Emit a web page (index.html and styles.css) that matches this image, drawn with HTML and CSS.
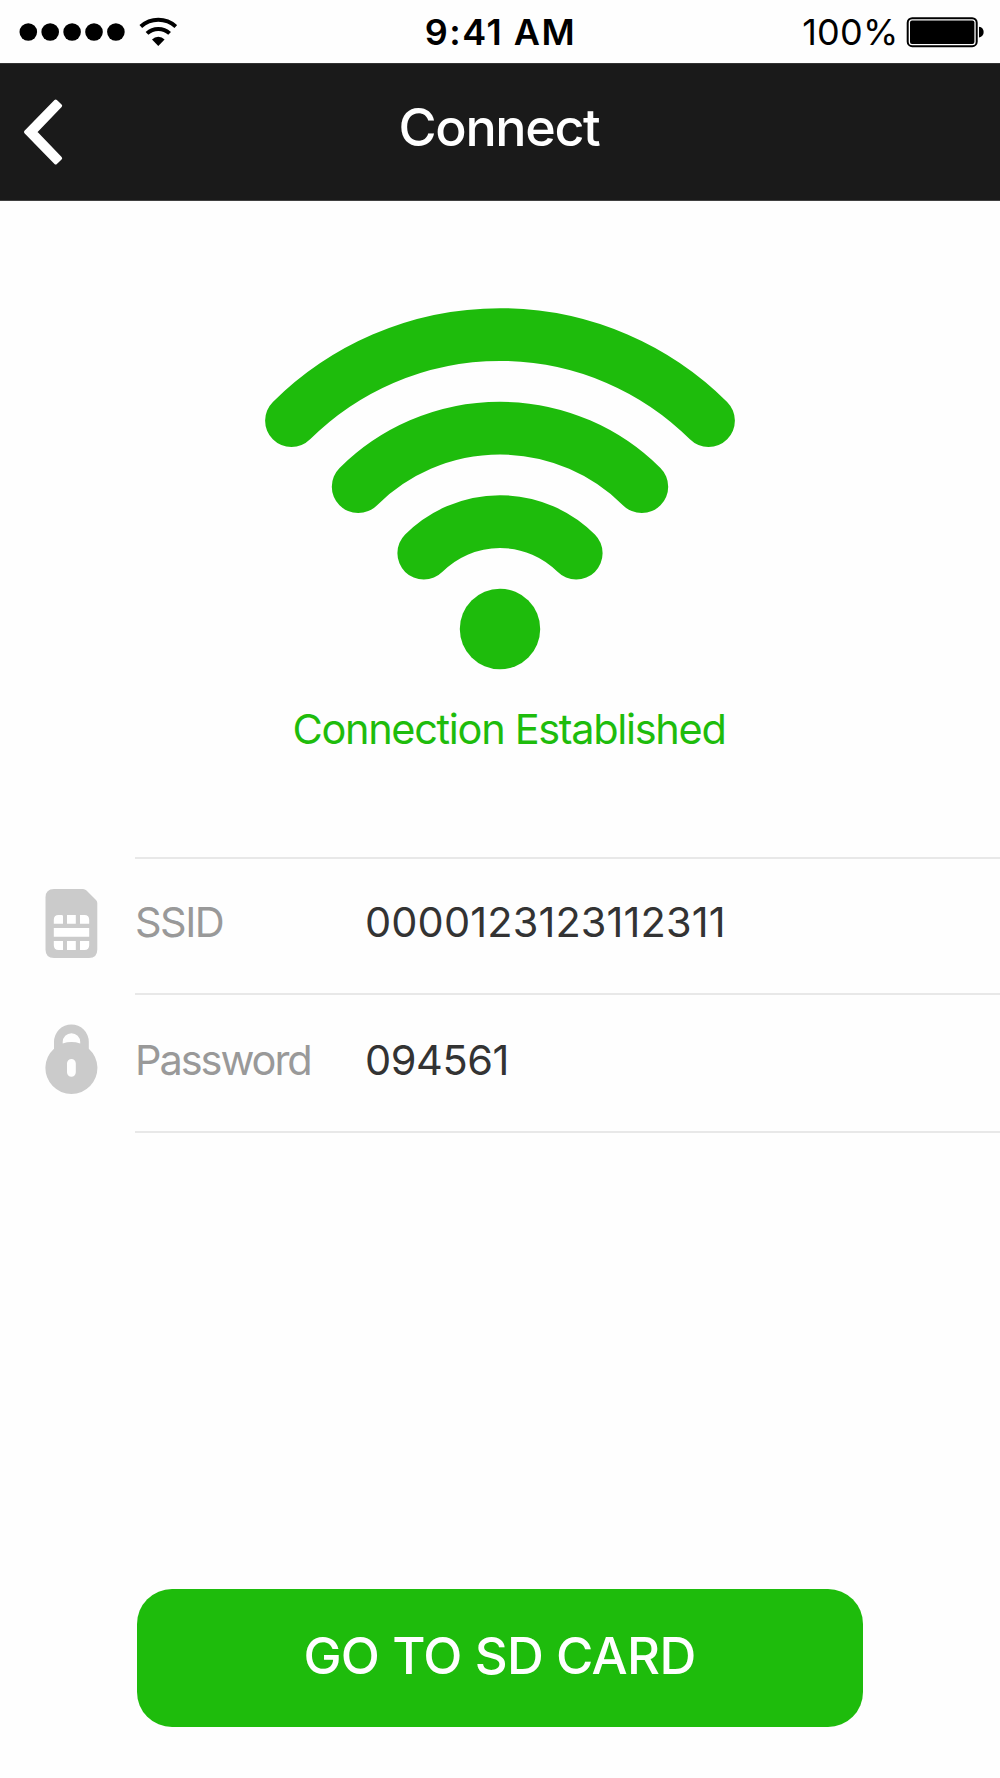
FILE: index.html
```html
<!DOCTYPE html>
<html lang="en">
<head>
<meta charset="utf-8">
<title>Connect</title>
<link rel="stylesheet" href="styles.css">
</head>
<body>
<div class="screen">
  <div class="status">
    <div class="status-left">
      <svg class="signal" width="108" height="20" viewBox="0 0 108 20">
        <circle cx="9.3" cy="10" r="8.8"/><circle cx="31.2" cy="10" r="8.8"/><circle cx="53.1" cy="10" r="8.8"/><circle cx="75" cy="10" r="8.8"/><circle cx="96.9" cy="10" r="8.8"/>
      </svg>
      <svg class="wifi-small" width="38" height="30" viewBox="139 17 38 30">
        <g fill="none" stroke="#000" stroke-width="4"><path d="M140.8 26.6A26 26 0 0 1 175.8 26.6"/><path d="M147 33.4A16.6 16.6 0 0 1 169.6 33.4"/></g>
        <path d="M158.3 45.9L152 39.4A9 9 0 0 1 164.6 39.4Z"/>
      </svg>
    </div>
    <div class="time">9:41 AM</div>
    <div class="status-right">
      <span class="percent">100%</span>
      <svg class="battery" width="78" height="32" viewBox="906 16.5 78 32">
        <rect x="907.7" y="18.7" width="69" height="28" rx="4.5" fill="#fff" stroke="#000" stroke-width="2"/>
        <rect x="910" y="21" width="64.4" height="23.4" rx="2"/>
        <path d="M979 27.2C985.2 27.8 985.2 37.4 979 38Z"/>
      </svg>
    </div>
  </div>

  <header class="nav">
    <svg class="back" width="42" height="68" viewBox="22 98 42 68">
      <path d="M55.7 101.2L60.4 105.8L35.2 132L60.4 158.2L55.7 162.8L25.7 132Z" fill="#fff" stroke="#fff" stroke-width="3.4" stroke-linejoin="round"/>
    </svg>
    <h1 class="title">Connect</h1>
  </header>

  <main class="content">
    <svg class="wifi-large" width="472" height="362" viewBox="264 308 472 362">
      <g fill="none" stroke="#1ebc0c" stroke-width="52.8" stroke-linecap="round">
        <path d="M291.5 420.6A295.6 295.6 0 0 1 708.5 420.6"/>
        <path d="M358.2 486.7A201 201 0 0 1 641.8 486.7"/>
        <path d="M423.8 553.2A107.7 107.7 0 0 1 576.2 553.2"/>
      </g>
      <circle cx="500" cy="629" r="40.2" fill="#1ebc0c"/>
    </svg>
    <p class="message">Connection Established</p>

    <div class="details">
      <div class="row">
        <svg class="row-icon" width="53" height="70" viewBox="45 888 53 70">
          <path fill="#cbcbcb" d="M54 889H83Q85 889 86.5 890.5L96 900Q97.3 901.3 97.3 903V949.5Q97.3 958 89 958H54Q45.5 958 45.5 949.5V897.5Q45.5 889 54 889Z"/>
          <path fill="#fff" d="M58.5 915H61.7Q63 915 63 916.3V923.8H53.8V919.7Q53.8 915 58.5 915ZM67 915H75.8V923.8H67ZM80 915H84.5Q89.2 915 89.2 919.7V923.8H80ZM53.8 928H89.2V936.8H53.8ZM53.8 941H63V950H58.5Q53.8 950 53.8 945.3ZM67 941H75.8V950H67ZM80 941H89.2V945.3Q89.2 950 84.5 950H80Z"/>
        </svg>
        <div class="row-body"><span class="label ssid">SSID</span><span class="value ssid-value">0000123123112311</span></div>
      </div>
      <div class="row">
        <svg class="row-icon" width="53" height="71" viewBox="45 1024 53 71">
          <path fill="#cbcbcb" fill-rule="evenodd" d="M54 1048.7V1041.8A17.4 17.4 0 0 1 88.8 1041.8V1048.7A26 26 0 1 1 54 1048.7ZM62.7 1043.5Q71.4 1040.7 80.2 1043.5V1042A8.75 8.75 0 0 0 62.7 1042ZM67 1063.3V1072.3A4.4 4.4 0 0 0 75.8 1072.3V1063.3A4.4 4.4 0 0 0 67 1063.3Z"/>
        </svg>
        <div class="row-body"><span class="label password">Password</span><span class="value password-value">094561</span></div>
      </div>
    </div>

    <button class="action">GO TO SD CARD</button>
  </main>
</div>
</body>
</html>
```

FILE: styles.css
```css
* { box-sizing: border-box; }
body { margin: 0; background: #fefefe; font-family: Inter, "Liberation Sans", sans-serif; }
svg { display: block; flex: none; }
.screen { width: 1000px; height: 1778px; display: flex; flex-direction: column; overflow: hidden; }

.status {
  height: 63px;
  display: grid;
  grid-template-columns: 1fr auto 1fr;
  align-items: center;
  padding: 1px 16px 0 19px;
  color: #000;
}
.status-left { display: flex; align-items: center; gap: 12px; }
.time { font-size: 36px; font-weight: 600; line-height: 62px; letter-spacing: 1.5px; margin-right: 2px; }
.status-right { display: flex; align-items: center; justify-content: flex-end; }
.percent { font-size: 36px; line-height: 62px; letter-spacing: 0.2px; margin-right: 7.5px; }

.nav {
  height: 138px;
  background: #1a1a1a;
  border-top: 1px solid #333;
  border-bottom: 1px solid #404040;
  display: grid;
  grid-template-columns: 64px 1fr 64px;
  align-items: center;
}
.back { margin-left: 22px; }
.title { margin: 0; padding: 0 2px 9px 0; text-align: center; font-size: 52px; line-height: 62px; font-weight: 450; letter-spacing: -1.35px; color: #fff; }

.content { flex: 1; display: flex; flex-direction: column; align-items: center; padding-top: 107px; }
.message { margin: 34px 0 0 18px; font-size: 41.5px; line-height: 50px; letter-spacing: -1.33px; color: #1ebc0c; }

.details { align-self: stretch; margin-top: 103px; }
.row { height: 136px; display: flex; padding-left: 45px; }
.row-icon { margin-top: 31px; }
.row-body { flex: 1; margin-left: 37px; border-top: 2px solid #e8e8e8; display: flex; padding-top: 38px; font-size: 41.5px; line-height: 50px; }
.row:last-child { height: 140px; }
.row:last-child .row-body { border-bottom: 2px solid #e8e8e8; padding-top: 40px; }
.label { width: 230px; color: #999; }
.value { color: #333; }
.ssid { letter-spacing: -1.53px; }
.password { letter-spacing: -2.05px; }
.ssid-value { letter-spacing: 0.12px; }
.password-value { letter-spacing: -0.44px; }

.action {
  width: 726px;
  height: 138px;
  margin: auto 0 51px;
  padding: 0 1px 5px 0;
  border: 0;
  border-radius: 35px;
  background: #1ebc0c;
  color: #fff;
  font: 450 51px/62px Inter, "Liberation Sans", sans-serif;
  letter-spacing: -0.67px;
}
```
